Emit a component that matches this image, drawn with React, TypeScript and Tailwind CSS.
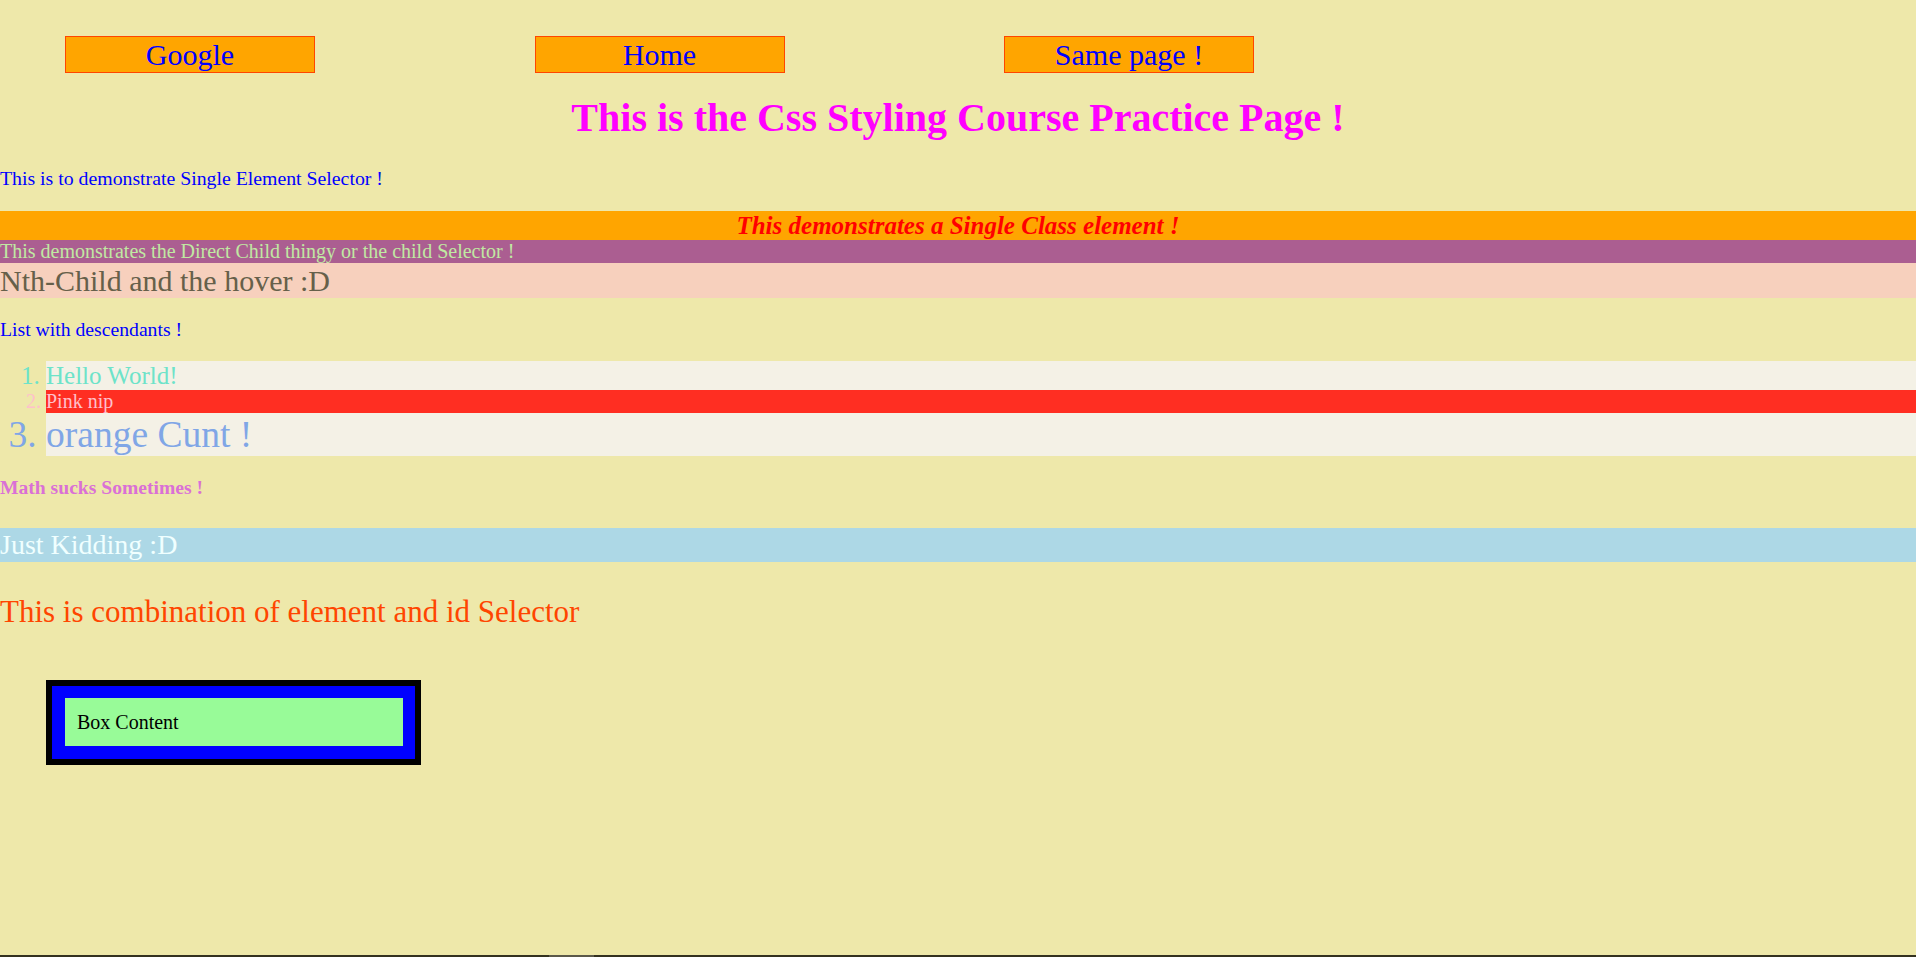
export default function App() {
  const links = ['Google', 'Home', 'Same page !'];

  return (
    <div className="min-h-screen w-full flex flex-col bg-[#eee8aa] font-['Liberation_Serif',serif] text-[20px] leading-[23px]">
      {/* Nav links */}
      <nav className="flex gap-[219.5px] pl-[65px] mt-[36px]">
        {links.map((l) => (
          <a
            key={l}
            href="#"
            className="w-[250px] h-[37px] border border-[#ff4500] bg-[#ffa500] pt-[1px] text-center text-[30px] leading-[34.5px] text-[#0000ff]"
          >
            {l}
          </a>
        ))}
      </nav>

      <h1 className="mt-[23px] text-center text-[40px] leading-[44.5px] font-bold text-[#ff00ff]">
        This is the Css Styling Course Practice Page !
      </h1>

      <p className="mt-[26px] text-[19.8px] text-[#0000ff]">This is to demonstrate Single Element Selector !</p>

      {/* Class / child / nth-child bands */}
      <div className="mt-[21.5px] bg-[#ffa500] text-center text-[25px] leading-[29px] font-bold italic text-[#ff0000]">
        This demonstrates a Single Class element !
      </div>
      <div className="bg-[#ab5e91] text-[#c0e9a2]">
        This demonstrates the Direct Child thingy or the child Selector !
      </div>
      <div className="bg-[#f7d0bd] text-[30px] leading-[35px] text-[#66604a]">Nth-Child and the hover :D</div>

      <p className="mt-[20px] text-[19.7px] text-[#0000ff]">List with descendants !</p>

      <ol className="mt-[20px] pl-[46px] list-decimal">
        <li className="bg-[#f4f1e6] text-[25px] leading-[29px] text-[#6de3c9]">Hello World!</li>
        <li className="bg-[#ff2e22] text-[#ffc0cb]">Pink nip</li>
        <li className="bg-[#f4f1e6] text-[37.5px] leading-[43px] text-[#80a6e6]">orange Cunt !</li>
      </ol>

      <p className="mt-[20px] text-[19.6px] font-bold text-[#da70d6]">Math sucks Sometimes !</p>

      <div className="mt-[29px] bg-[#add8e6] text-[28px] leading-[34px] text-[#f0ffff]">Just Kidding :D</div>

      <p className="mt-[33px] text-[31px] leading-[34.5px] text-[#ff4500]">
        This is combination of element and id Selector
      </p>

      {/* Box model */}
      <div className="mt-[50.5px] ml-[46px] w-[375px] border-[6px] border-black bg-[#0000ff] pt-[12px] pb-[13px] pl-[13px] pr-[12px]">
        <div className="h-[48px] bg-[#98fb98] pl-[12px] flex items-center text-black">Box Content</div>
      </div>

      {/* bottom strip */}
      <div className="mt-auto flex h-[2px] bg-[#34321f]">
        <div className="w-[549px]" />
        <div className="w-[45px] bg-[#5b5949]" />
      </div>
    </div>
  );
}
